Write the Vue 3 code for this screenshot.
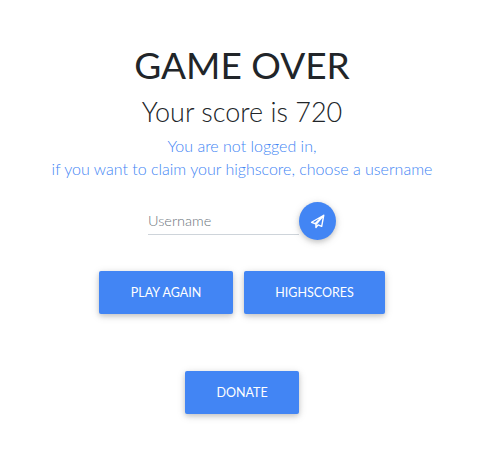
<script setup>
const title = 'GAME OVER'
</script>

<template>
  <main class="page">
    <h1 class="title">{{ title }}</h1>
    <h2 class="score">Your score is 720</h2>
    <p class="note">You are not logged in,<br />if you want to claim your highscore, choose a username</p>
    <form class="claim" @submit.prevent>
      <input class="field" type="text" placeholder="Username" />
      <button class="send" type="submit" aria-label="Send">
        <svg viewBox="0 0 24 24" width="15" height="15"><path fill="none" stroke="#fff" stroke-width="2.2" stroke-linejoin="round" d="M22 2 2.500 13.200l5.500 2.300L22 2zM22 2 9.500 17v4.500l3.400-4.100 5.800 2.400L22 2z"/></svg>
      </button>
    </form>
    <div class="actions">
      <button class="btn play" type="button">PLAY AGAIN</button>
      <button class="btn scores" type="button">HIGHSCORES</button>
    </div>
    <div class="donate">
      <button class="btn give" type="button">DONATE</button>
    </div>
  </main>
</template>

<style scoped>
.page {
  width: 482px;
  height: 450px;
  box-sizing: border-box;
  padding: 42px 0 0 2px;
  display: flex;
  flex-direction: column;
  align-items: center;
  font-family: "Lato", "Open Sans", sans-serif;
  background: #fff;
  overflow: hidden;
}
.title {
  margin: 0;
  font-size: 37px;
  line-height: 46px;
  font-weight: 400;
  color: #212529;
}
.score {
  margin: 7px 0 0;
  font-size: 27px;
  line-height: 34px;
  font-weight: 300;
  color: #212529;
}
.note {
  margin: 5px 0 0;
  font-size: 16px;
  line-height: 23px;
  font-weight: 300;
  text-align: center;
  color: #4285f4;
}
.claim {
  margin-top: 22px;
  display: flex;
  align-items: flex-start;
}
.field {
  box-sizing: border-box;
  width: 151px;
  height: 29px;
  margin-top: 4px;
  padding: 0;
  border: 0;
  border-bottom: 1px solid #ced4da;
  outline: 0;
  font: 300 14.500px "Lato", sans-serif;
  color: #495057;
}
.field::placeholder {
  color: #6c757d;
}
.send {
  width: 37px;
  height: 38px;
  padding: 0;
  border: 0;
  border-radius: 50%;
  background: #4285f4;
  display: flex;
  align-items: center;
  justify-content: center;
  box-shadow: 0 2px 5px rgba(0, 0, 0, .16), 0 2px 10px rgba(0, 0, 0, .12);
}
.actions {
  margin-top: 31px;
  display: flex;
  gap: 11px;
}
.btn {
  height: 43px;
  padding: 0;
  border: 0;
  border-radius: 2px;
  background: #4285f4;
  color: #fff;
  font: 400 12.500px "Lato", sans-serif;
  box-shadow: 0 2px 5px rgba(0, 0, 0, .16), 0 2px 10px rgba(0, 0, 0, .12);
}
.play {
  width: 134px;
}
.scores {
  width: 141px;
}
.give {
  width: 114px;
}
.donate {
  margin-top: 57px;
}
</style>
